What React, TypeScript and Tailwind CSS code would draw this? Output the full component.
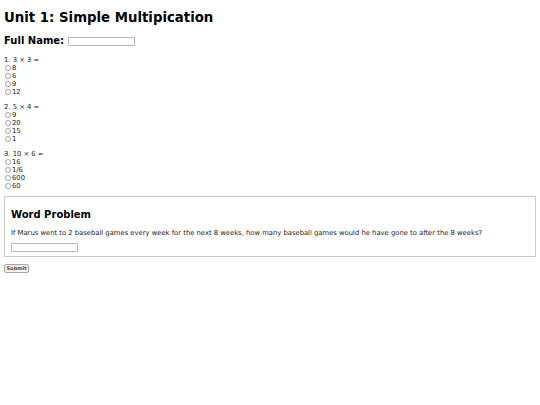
import React from "react";

const questions = [
  { q: "1. 3 × 3 =", opts: ["8", "6", "9", "12"] },
  { q: "2. 5 × 4 =", opts: ["9", "20", "15", "1"] },
  { q: "3. 10 × 6 =", opts: ["16", "1/6", "600", "60"] },
];

function Radio() {
  return (
    <span className="inline-block w-[6px] h-[6px] rounded-full border border-[#a0a0a0] bg-white mr-[1px] ml-[1px]" />
  );
}

export default function App() {
  return (
    <div className="bg-white w-[540px] h-[405px] px-[4px] pt-[8px] text-black" style={{ fontFamily: '"DejaVu Sans", Verdana, sans-serif' }}>
      <h1 className="text-[13.3px] font-bold leading-[20px]">Unit 1: Simple Multipication</h1>
      <div className="mt-[6px] flex items-center h-[14px]">
        <span className="text-[10px] font-bold leading-[14px]">Full Name:</span>
        <span className="ml-[4px] inline-block w-[67px] h-[9px] border border-[#b5b5b5] rounded-[1px] bg-white" />
      </div>
      <div className="mt-[8px] text-[6.8px] leading-[8px] text-[#222]">
        {questions.map((qq, i) => (
          <div key={i} className={i > 0 ? "mt-[7px]" : ""}>
            <div>{qq.q}</div>
            {qq.opts.map((o) => (
              <div key={o} className="flex items-center">
                <Radio />
                <span>{o}</span>
              </div>
            ))}
          </div>
        ))}
      </div>
      <div className="mt-[6px] border border-[#c8c8c8] px-[6px] pt-[10px] pb-[4px]">
        <h2 className="text-[10px] font-bold leading-[16px]">Word Problem</h2>
        <p className="mt-[6px] text-[6.8px] leading-[8px] text-[#222]">
          If Marus went to 2 baseball games every week for the next 8 weeks, how many baseball games would he have gone to after the 8 weeks?
        </p>
        <div className="mt-[6px] w-[67px] h-[9px] border border-[#b5b5b5] rounded-[1px]" />
      </div>
      <div className="mt-[7px] flex">
        <span className="inline-flex items-center justify-center w-[25px] h-[9px] border border-[#a8a8a8] rounded-[2px] bg-[#f2f2f2] text-[5px] font-semibold leading-[5px] text-[#444]">Submit</span>
      </div>
    </div>
  );
}
